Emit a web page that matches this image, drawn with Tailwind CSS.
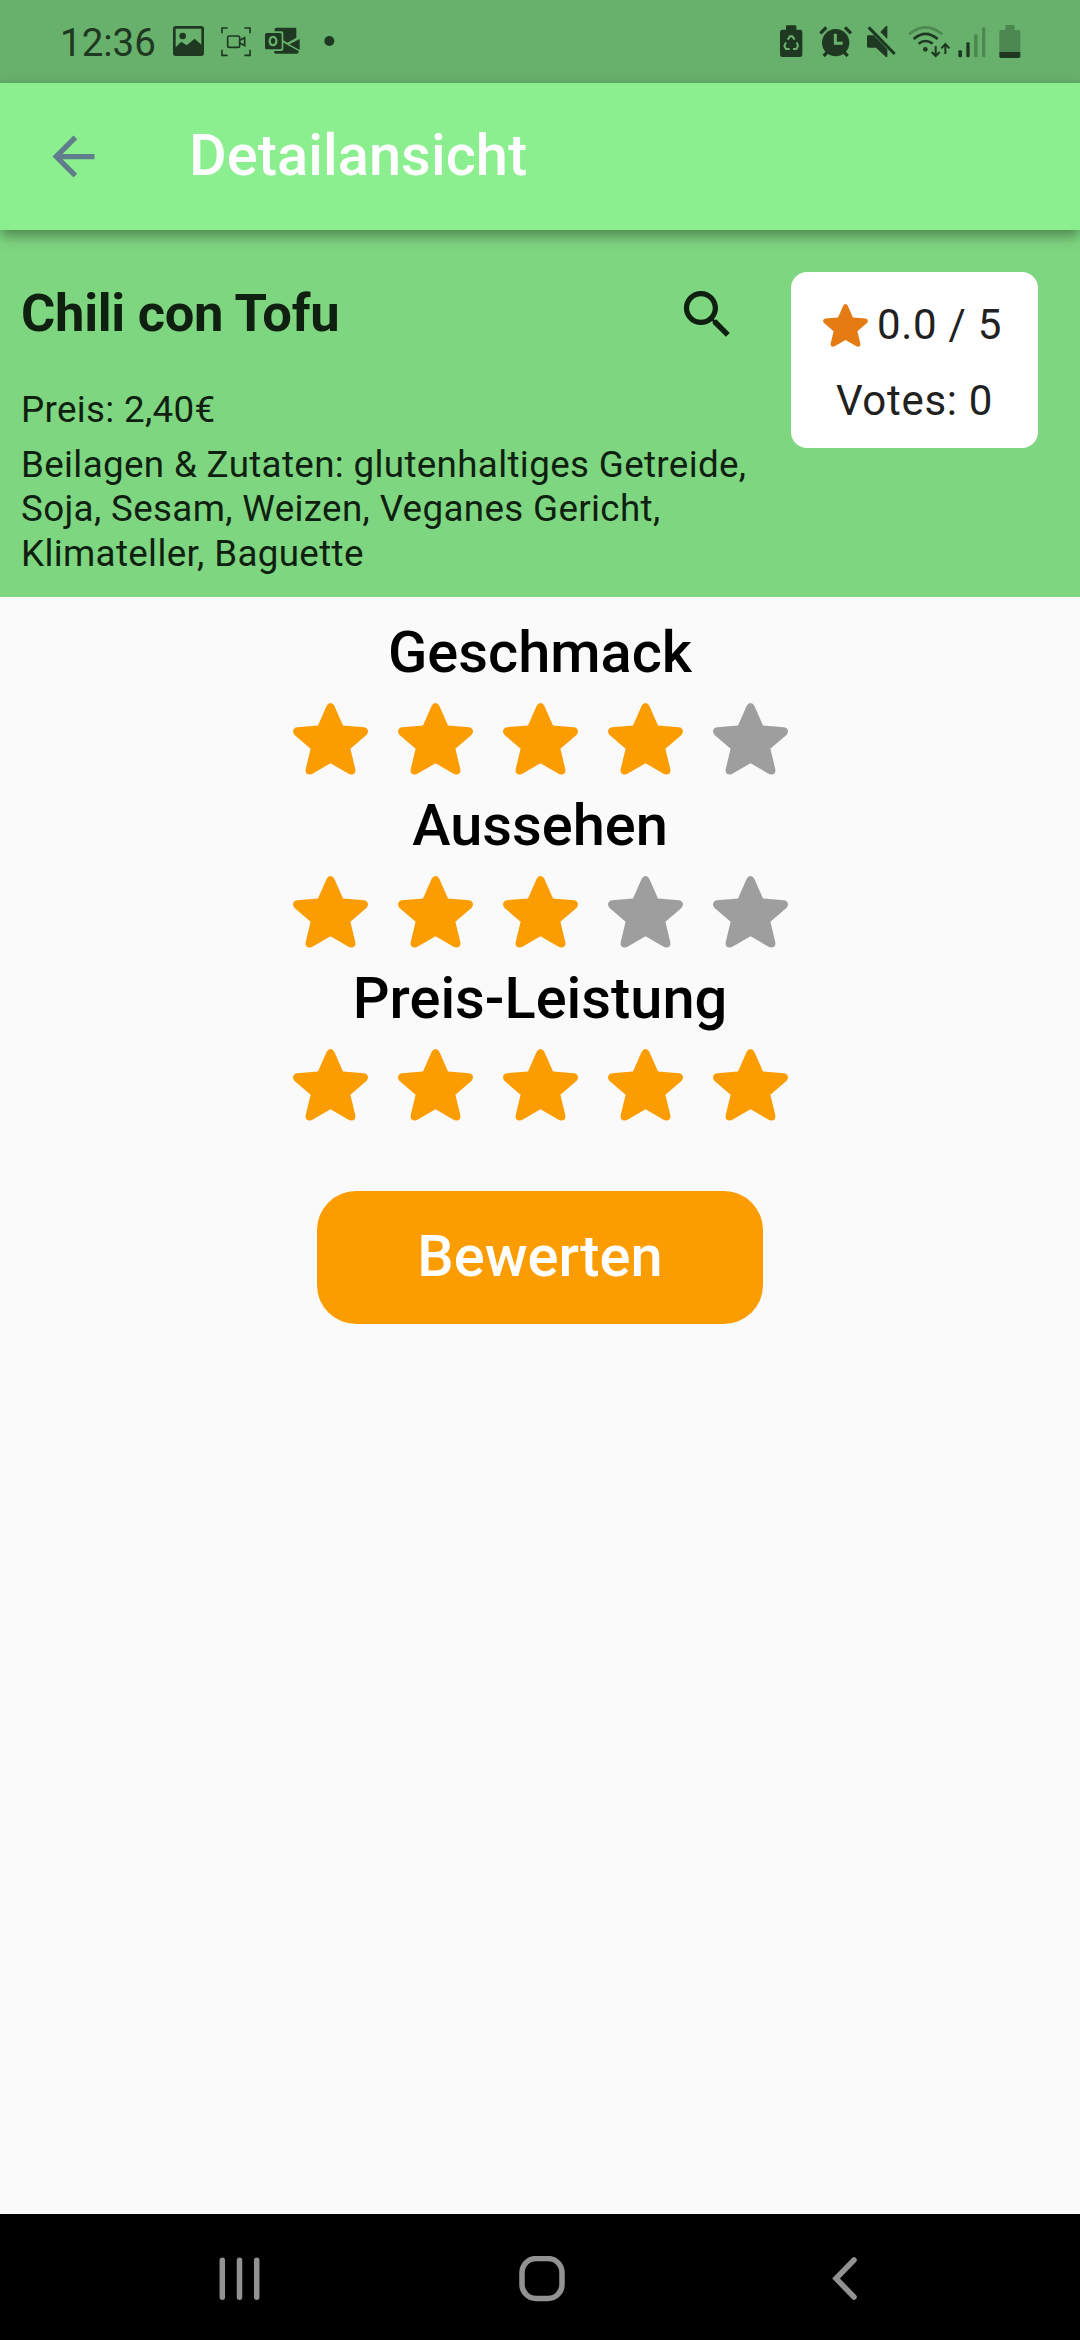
<!DOCTYPE html>
<html lang="de">
<head>
<meta charset="utf-8">
<title>Detailansicht</title>
<script src="https://cdn.jsdelivr.net/npm/@tailwindcss/browser@4"></script>
</head>
<body class="w-[1080px] h-[2340px] overflow-hidden flex flex-col bg-[#fafafa] font-['Roboto',sans-serif]">
<svg class="hidden">
  <symbol id="star" viewBox="0 0 75 72"><path d="M33.7 2.8Q35 0 37.5 0Q40 0 41.3 2.8L50 22.6L71 24.2Q75 24.8 75 28.6Q74.9 30.6 73.4 32L57.4 45.7L62.4 66.5Q62.8 71.6 58.2 71.6Q56.8 71.5 55.6 70.8L37.5 60.2L19.4 70.8Q18.2 71.5 16.8 71.6Q12.2 71.6 12.6 66.5L17.6 45.7L1.6 32Q0.1 30.6 0 28.6Q0 24.8 4 24.2L25 22.6Z"/></symbol>
</svg>

<!-- Status bar -->
<div class="h-[83px] shrink-0 bg-[#68b16c] text-[#1f3821] flex items-start pt-5 pl-[60px] pr-[59px]">
  <div class="text-[38.5px] leading-[46px] w-[113px] whitespace-nowrap">12:36</div>
  <svg class="h-10 w-[31px] mr-[17px]" viewBox="519 60 93 120" fill="currentColor"><path fill-rule="evenodd" d="M527 78H604Q612 78 612 86V160Q612 168 604 168H527Q519 168 519 160V86Q519 78 527 78ZM527 86V142L544 125L560 136L584 116L604 134V86Z"/><circle cx="548" cy="108" r="10"/></svg>
  <svg class="h-10 w-[30px] mr-[14px]" viewBox="661 60 90 120" fill="none" stroke="currentColor" stroke-width="5"><path d="M664 100V84H681M731 84H748V100M748 149V166H731M681 166H664V149"/><rect x="681" y="108" width="36" height="34" rx="5"/><path d="M717 121L732 113V137L717 129"/></svg>
  <svg class="h-10 w-9" viewBox="795 60 108 120" fill="currentColor"><path d="M829 83H885Q889 83 889 87V113L862 128L850 121V100Q850 94 844 94H824V88Q824 83 829 83ZM899 117V150L868 133ZM850 128L896 153V156Q896 161 890 161H827Q822 161 822 153H844Q850 153 850 147Z"/><path fill-rule="evenodd" d="M800 99H840Q845 99 845 104V143Q845 148 840 148H800Q795 148 795 143V104Q795 99 800 99ZM819 107C801 107 801 139 819 139C837 139 837 107 819 107ZM819 114C828 114 828 132 819 132C810 132 810 114 819 114Z"/></svg>
  <svg class="h-10 w-[11px] ml-[23px]" viewBox="971 60 33 120" fill="currentColor"><circle cx="987" cy="123" r="15"/></svg>

  <svg class="h-10 w-[23px] ml-auto mr-4" viewBox="118 60 69 120" fill="currentColor"><path d="M139 76H164Q167 76 167 79V89H178Q185 89 185 96V164Q185 171 178 171H125Q118 171 118 164V96Q118 89 125 89H136V79Q136 76 139 76Z"/><path d="M141 119L148 109H155L162 119M168 127L172 138L167 147H157M147 147H136L131 138L136 127" fill="none" stroke="#69b26d" stroke-width="6"/><path d="M151 120L162 132H155V148H148V132H140Z"/></svg>
  <svg class="h-10 w-[34px] mr-[14px]" viewBox="235 60 102 120"><circle cx="285" cy="128" r="41" fill="currentColor"/><path d="M239 100L257 82M313 82L331 100M249 168L262 154M321 168L308 154" stroke="currentColor" stroke-width="10" fill="none"/><path d="M284 101V130H306" fill="none" stroke="#69b26d" stroke-width="9"/></svg>
  <svg class="h-10 w-[30px] mr-[11px]" viewBox="380 60 90 120" fill="currentColor"><path d="M441 78V117L420 96L437 78ZM384 106H400L441 148V171H437L407 143H384Q380 143 380 139V110Q380 106 384 106Z"/><path d="M385 82L463 162" stroke="currentColor" stroke-width="9"/></svg>
  <svg class="h-10 w-[42px] mr-2" viewBox="503 60 126 120" fill="none" stroke="currentColor" stroke-width="8"><path d="M506 103Q555 61 606 103" stroke="#4c8951"/><path d="M520 117Q555 86 592 117M535 131Q555 115 577 131"/><circle cx="555" cy="148" r="7" fill="currentColor" stroke="none"/><path d="M586 138V167M574 156L586 168L598 156M615 162V134M603 145L615 132L627 145" stroke-width="6"/></svg>
  <svg class="h-10 w-7 mr-[13px]" viewBox="653 60 84 120" fill="currentColor"><rect x="654" y="151" width="11" height="21" rx="4"/><rect x="678" y="127" width="10" height="45" rx="4"/><g fill="#4c8951"><rect x="701" y="103" width="11" height="69" rx="4"/><rect x="725" y="82" width="10" height="90" rx="4"/></g></svg>
  <svg class="h-10 w-[22px]" viewBox="776 60 66 120"><path fill="#4c8951" d="M798 75H820Q823 75 823 78V90H835Q840 90 840 95V156H777V95Q777 90 782 90H795V78Q795 75 798 75Z"/><path fill="currentColor" d="M777 156H840V169Q840 174 835 174H782Q777 174 777 169Z"/></svg>
</div>

<!-- App bar -->
<header class="relative z-10 h-[147px] shrink-0 bg-[#8bef8f] flex items-center pl-[42px] shadow-[0_5px_10px_-2px_rgba(0,0,0,0.2),0_10px_13px_rgba(0,0,0,0.14),0_2px_14px_rgba(0,0,0,0.12)]">
  <svg class="size-[63px] mr-[84px]" viewBox="0 0 24 24" fill="#607d8b"><path d="M20 11H7.83l5.59-5.59L12 4l-8 8 8 8 1.41-1.41L7.83 13H20v-2z"/></svg>
  <h1 class="text-[57.75px] leading-[68px] tracking-[0.05px] font-medium text-white pb-[4px]">Detailansicht</h1>
</header>

<!-- Dish summary -->
<section class="h-[367px] shrink-0 bg-[#7ed681] flex items-start justify-between pl-[21px] pr-[42px] text-[#0f1f10]">
  <div class="w-[735px] pt-[53px]">
    <div class="h-[62px] flex items-center justify-between pr-[17px]">
      <h2 class="text-[52.5px] leading-[62px] font-bold whitespace-nowrap tracking-[-0.3px] pb-[3px]">Chili con Tofu</h2>
      <svg class="size-[63px]" viewBox="0 0 24 24" fill="currentColor"><path d="M15.5 14h-.79l-.28-.27C15.41 12.59 16 11.11 16 9.5 16 5.91 13.09 3 9.5 3S3 5.91 3 9.5 5.91 16 9.5 16c1.61 0 3.09-.59 4.23-1.57l.27.28v.79l5 4.99L20.49 19l-4.99-5zm-6 0C7.01 14 5 11.99 5 9.5S7.01 5 9.5 5 14 7.01 14 9.5 11.99 14 9.5 14z"/></svg>
    </div>
    <p class="mt-[43px] text-[36.75px] leading-[44px] tracking-[0.33px]">Preis: 2,40€</p>
    <p class="mt-[11px] text-[36.75px] leading-[44.4px] tracking-[0.35px] whitespace-nowrap">Beilagen &amp; Zutaten: glutenhaltiges Getreide,<br>Soja, Sesam, Weizen, Veganes Gericht,<br>Klimateller, Baguette</p>
  </div>
  <div class="mt-[42px] w-[247px] h-[176px] rounded-2xl bg-white text-[#212121] flex flex-col items-center pt-[28px] text-[42px] leading-[50px] tracking-[0.7px] whitespace-nowrap">
    <div class="flex items-center gap-[9px] pr-[4px]">
      <svg class="w-[45px] h-[43px] fill-[#e57b13]"><use href="#star"/></svg>
      <span>0.0 / 5</span>
    </div>
    <div class="mt-[26px]">Votes: 0</div>
  </div>
</section>

<!-- Ratings -->
<main class="grow flex flex-col items-center">
  <div id="ratings" class="flex flex-col items-center pt-[21px]"></div>
  <button class="mt-[53px] w-[446px] h-[133px] rounded-[39px] bg-[#fb9c00] text-white text-[57.75px] leading-[68px] font-medium pb-[3px]">Bewerten</button>
</main>

<!-- Navigation bar -->
<nav class="h-[126px] shrink-0 bg-black text-[#929292] flex items-center justify-between pl-[217px] pr-[220px] pt-[3px]">
  <svg class="w-[45px] h-[46px]" viewBox="0 0 45 46" fill="none" stroke="currentColor" stroke-width="5.5" stroke-linecap="round"><path d="M5.3 4.2V41.2M22.5 4.2V41.2M39.7 4.2V41.2"/></svg>
  <svg class="w-[46px] h-[46px] mr-[8px]" viewBox="0 0 46 46" fill="none" stroke="currentColor" stroke-width="5.5"><rect x="3" y="2.5" width="40" height="40" rx="14"/></svg>
  <svg class="w-[30px] h-[46px]" viewBox="0 0 30 46" fill="none" stroke="currentColor" stroke-width="5.5" stroke-linecap="round"><path d="M24 4L6 22.5L24 41"/></svg>
</nav>

<script>
  const ratings = [["Geschmack", 4], ["Aussehen", 3], ["Preis-Leistung", 5]];
  document.getElementById("ratings").innerHTML = ratings.map(([label, n]) => `
    <div class="h-[173.2px] flex flex-col items-center">
      <h3 class="text-[57.75px] leading-[68px] font-medium text-black whitespace-nowrap">${label}</h3>
      <div class="mt-[17px] flex gap-[30px]">${[1, 2, 3, 4, 5].map(i =>
        `<svg class="w-[75px] h-[72px] ${i <= n ? "fill-[#fb9c00]" : "fill-[#9e9e9e]"}"><use href="#star"/></svg>`).join("")}</div>
    </div>`).join("");
</script>
</body>
</html>
